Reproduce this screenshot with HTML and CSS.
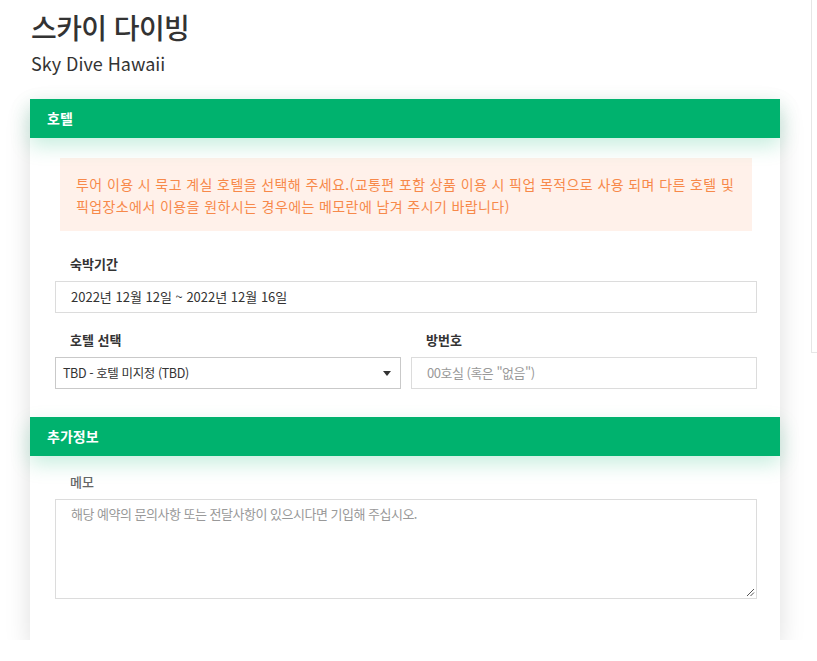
FILE: index.html
```html
<!DOCTYPE html>
<html lang="ko">
<head>
<meta charset="utf-8">
<title>스카이 다이빙</title>
<link rel="stylesheet" href="styles.css">
</head>
<body>
<div class="layout">
  <main class="main">
    <header class="page-head">
      <h1 class="title">스카이 다이빙</h1>
      <p class="subtitle">Sky Dive Hawaii</p>
    </header>
    <section class="card">
      <div class="section-head">호텔</div>
      <div class="section-body hotel-body">
        <div class="notice">투어 이용 시 묵고 계실 호텔을 선택해 주세요.(교통편 포함 상품 이용 시 픽업 목적으로 사용 되며 다른 호텔 및 픽업장소에서 이용을 원하시는 경우에는 메모란에 남겨 주시기 바랍니다)</div>
        <div class="field field-stay">
          <label class="label">숙박기간</label>
          <div class="input">2022년 12월 12일 ~ 2022년 12월 16일</div>
        </div>
        <div class="row">
          <div class="field">
            <label class="label">호텔 선택</label>
            <div class="select">TBD - 호텔 미지정 (TBD)<span class="caret"></span></div>
          </div>
          <div class="field">
            <label class="label">방번호</label>
            <div class="input placeholder">00호실 (혹은 "없음")</div>
          </div>
        </div>
      </div>
      <div class="section-head">추가정보</div>
      <div class="section-body extra-body">
        <div class="field">
          <label class="label label-light">메모</label>
          <div class="textarea placeholder">해당 예약의 문의사항 또는 전달사항이 있으시다면 기입해 주십시오.<svg class="grip" width="9" height="9" viewBox="0 0 9 9"><path d="M8 1 L1 8 M8 4.5 L4.5 8" stroke="#555" stroke-width="1" fill="none"/></svg></div>
        </div>
      </div>
    </section>
  </main>
  <aside class="side"></aside>
</div>
</body>
</html>
```
FILE: styles.css
```css
html, body {
  margin: 0;
  padding: 0;
  overflow: hidden;
  background: #fff;
}
body {
  font-family: "Noto Sans CJK KR", "Malgun Gothic", sans-serif;
  color: #333;
}
.layout {
  display: flex;
  align-items: flex-start;
  width: 1100px;
}
.main {
  width: 750px;
  margin-left: 30px;
  flex-shrink: 0;
}
.side {
  width: 260px;
  height: 352px;
  margin-left: 31px;
  flex-shrink: 0;
  background: #fff;
  border-left: 1px solid #e6e6e6;
  border-bottom: 1px solid #e6e6e6;
}
.page-head {
  padding: 10px 0 0 1px;
}
.title {
  margin: 0;
  font-size: 28px;
  line-height: 34px;
  font-weight: 500;
  letter-spacing: -0.6px;
  color: #333;
}
.subtitle {
  margin: 7px 0 0;
  font-size: 18px;
  line-height: 24px;
  color: #333;
}
.card {
  margin-top: 24px;
  background: #fff;
  box-shadow: 0 10px 24px rgba(0, 0, 0, 0.13);
  padding-bottom: 41px;
}
.section-head {
  position: relative;
  height: 39px;
  line-height: 38px;
  padding-left: 17px;
  background: #00b26e;
  color: #fff;
  font-size: 14px;
  font-weight: 700;
  box-shadow: 0 8px 20px rgba(0, 178, 110, 0.22);
}
.section-body {
  padding: 0 23px 0 25px;
}
.hotel-body {
  padding-top: 20px;
  padding-bottom: 28px;
}
.extra-body {
  padding-top: 16px;
}
.notice {
  margin: 0 5px;
  padding: 15px 16px 14px;
  background: #fff1ea;
  color: #f7894a;
  font-size: 14px;
  line-height: 22px;
  letter-spacing: 0.4px;
}
.field-stay {
  margin-top: 23px;
}
.row {
  margin-top: 17px;
  display: grid;
  grid-template-columns: 1fr 1fr;
  gap: 10px;
}
.label {
  display: block;
  padding-left: 15px;
  margin-bottom: 7px;
  font-size: 13px;
  line-height: 20px;
  font-weight: 700;
  color: #333;
}
.label-light {
  font-weight: 500;
  color: #666;
}
.input, .select {
  box-sizing: border-box;
  height: 32px;
  border: 1px solid #dcdcdc;
  padding: 0 15px;
  font-size: 13px;
  line-height: 30px;
  color: #333;
  white-space: nowrap;
}
.select {
  position: relative;
  padding-left: 7px;
  border-color: #c9c9c9;
  font-size: 12.5px;
  letter-spacing: -0.4px;
}
.caret {
  position: absolute;
  right: 9px;
  top: 13px;
  width: 0;
  height: 0;
  border-left: 4px solid transparent;
  border-right: 4px solid transparent;
  border-top: 5px solid #333;
}
.placeholder {
  color: #999;
  letter-spacing: -0.5px;
}
.textarea {
  position: relative;
  box-sizing: border-box;
  height: 100px;
  border: 1px solid #dcdcdc;
  padding: 4px 15px;
  font-size: 13px;
  line-height: 20px;
}
.grip {
  position: absolute;
  right: 1px;
  bottom: 1px;
}
```
